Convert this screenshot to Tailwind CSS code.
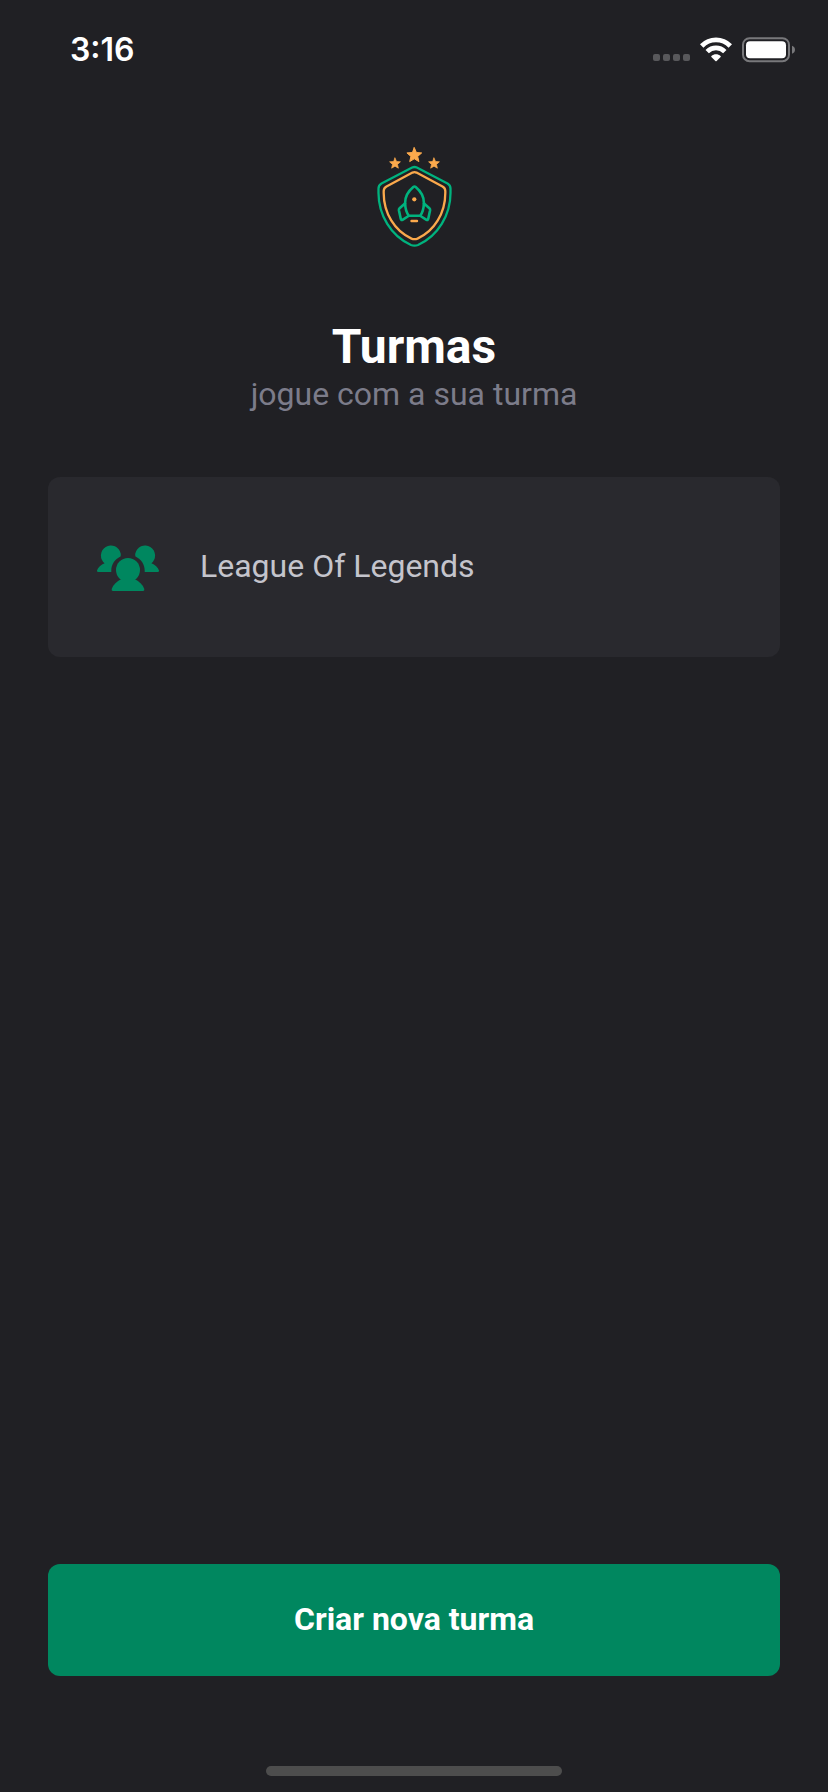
<!DOCTYPE html>
<html lang="pt-BR">
<head>
<meta charset="utf-8">
<meta name="viewport" content="width=device-width, initial-scale=1">
<title>Turmas</title>
<script src="https://cdn.jsdelivr.net/npm/@tailwindcss/browser@4"></script>
</head>
<body class="flex min-h-screen flex-col bg-[#202024] font-['Roboto',sans-serif] text-white">
  <header class="flex h-[99px] items-center justify-between pr-8 pl-[70px]">
    <time class="font-['Inter',sans-serif] text-[32px] leading-10 font-semibold">3:16</time>
    <div class="flex items-center gap-2.5">
      <svg class="h-[26px] w-[37px]" viewBox="0 0 37 26" fill="#58585b" aria-hidden="true">
        <rect y="17" width="7" height="7" rx="2"/><rect x="10" y="17" width="7" height="7" rx="2"/><rect x="20" y="17" width="7" height="7" rx="2"/><rect x="30" y="17" width="7" height="7" rx="2"/>
      </svg>
      <svg class="h-[26px] w-8" viewBox="0 0 32 26" aria-label="Wi-Fi">
        <g fill="none" stroke="#fff" stroke-width="4.800">
          <path d="M1.700 9C9.700 .9 22.300 .9 30.300 9"/>
          <path d="M7.200 14.600C12.200 9.700 19.800 9.700 24.800 14.600"/>
        </g>
        <path fill="#fff" d="M11.400 19C14 16.600 18 16.600 20.600 19Q21 19.500 20.600 19.900L16.600 23.900Q16 24.400 15.400 23.900L11.400 19.900Q11 19.500 11.400 19Z"/>
      </svg>
      <svg class="h-[26px] w-[54px]" viewBox="0 0 54 26" aria-label="Bateria">
        <rect x="1" y="1.200" width="46" height="23" rx="6.500" fill="none" stroke="#78787b" stroke-width="2"/>
        <rect x="4" y="4.200" width="40" height="17" rx="4" fill="#fff"/>
        <path fill="#78787b" d="M50 8.700Q53 9.900 53 12.700T50 16.700Z"/>
      </svg>
    </div>
  </header>

  <main class="flex flex-1 flex-col px-12 pt-12">
    <div class="flex justify-center">
      <svg class="h-[101px] w-[77px]" viewBox="0 0 77 101" fill="none" stroke-linejoin="round" stroke-linecap="round" aria-label="Logo">
        <defs><path id="star" d="M0-7.500 2.100-2.700 7.400-2.300 3.400 1.200 4.600 6.400 0 3.600-4.600 6.400-3.400 1.200-7.400-2.300-2.100-2.700Z"/></defs>
        <g fill="#fba94c" stroke="#fba94c">
          <use href="#star" transform="translate(38.300 8.200)"/>
          <use href="#star" transform="translate(19 16.500) scale(.73)"/>
          <use href="#star" transform="translate(58 16.500) scale(.73)"/>
        </g>
        <path stroke="#00b37e" stroke-width="2.300" d="M36.200 20.600Q38.500 19.400 40.800 20.600L71.500 36.500Q74.500 38.200 74.500 41.500V46C74.500 68 62 89 42 98Q38.500 99.400 35 98C15 89 2.500 68 2.500 46V41.500Q2.500 38.200 5.500 36.500Z"/>
        <path stroke="#fba94c" stroke-width="2.300" d="M36.500 25.600Q38.500 24.600 40.500 25.600L66.500 39.400Q69.300 41 69.300 44V46C69.300 66 58.500 84 41.500 91.600Q38.500 92.800 35.500 91.600C18.500 84 7.700 66 7.700 46V44Q7.700 41 10.500 39.400Z"/>
        <g stroke="#00b37e" stroke-width="2.600">
          <path d="M37.300 40Q38.500 39 39.700 40C44.500 44 48 49.500 47.900 56C47.800 61 46.200 66 44.200 68.800H32.800C30.800 66 29.200 61 29.100 56C29 49.500 32.500 44 37.300 40Z"/>
          <path d="M29 56.500 23.600 61.200Q22.700 62 22.900 63.200L24.800 72Q25.200 73.500 26.500 72.800L32.500 69"/>
          <path d="M48 56.500 53.400 61.200Q54.300 62 54.100 63.200L52.200 72Q51.800 73.500 50.500 72.800L44.500 69"/>
        </g>
        <circle cx="38.300" cy="52.300" r="2.100" fill="#fba94c"/>
        <path stroke="#fba94c" stroke-width="2.400" d="M35.500 74H41"/>
      </svg>
    </div>

    <div class="mt-[71px] text-center">
      <h1 class="text-5xl leading-14 font-bold">Turmas</h1>
      <p class="text-[32px] leading-[38px] text-[#7c7c8a]">jogue com a sua turma</p>
    </div>

    <button type="button" class="mt-16 flex h-[180px] items-center gap-10 rounded-xl bg-[#29292e] px-12 text-left text-[32px] leading-[38px] text-[#c4c4cc]">
      <svg class="size-16 shrink-0" viewBox="0 0 64 64" fill="#00875f" aria-hidden="true">
        <defs><path id="member" d="M24.700 18.500A10 10 0 1 0 8.600 28.300C5 29.600 2 32.500 1 35.500Q.800 37 2.300 37H15.300C15 29.500 18.500 24.500 24.500 21.500Q25 20.500 24.700 18.500Z"/></defs>
        <use href="#member"/>
        <use href="#member" transform="translate(64) scale(-1 1)"/>
        <circle cx="32" cy="35" r="12"/>
        <path d="M25.500 44C20.500 46.500 17 50 15.700 54Q15.300 56 17 56H47Q48.700 56 48.300 54C47 50 43.500 46.500 38.500 44Z"/>
      </svg>
      <span class="pb-0.5">League Of Legends</span>
    </button>

    <button type="button" class="mt-auto h-28 rounded-xl bg-[#00875f] pb-0.5 text-[32px] leading-[38px] font-bold">Criar nova turma</button>
  </main>

  <footer class="flex h-[116px] items-end justify-center pb-4">
    <div class="h-2.5 w-[296px] rounded-full bg-[#4d4d4d]"></div>
  </footer>
</body>
</html>
